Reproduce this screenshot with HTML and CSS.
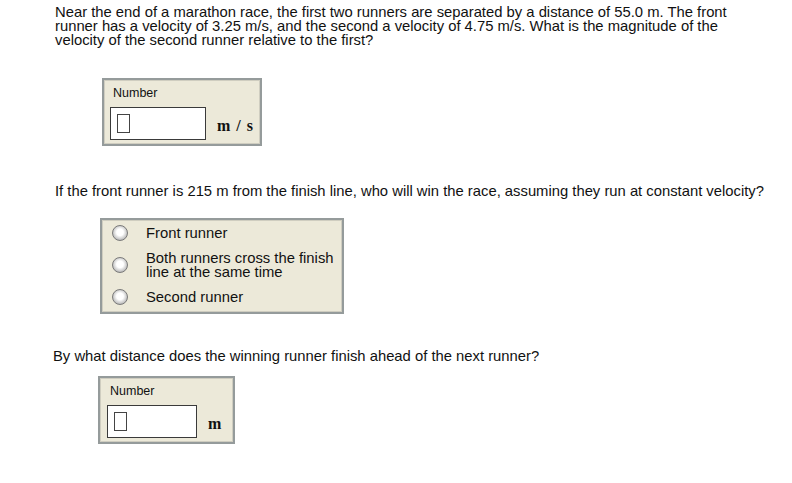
FILE: index.html
```html
<!DOCTYPE html>
<html lang="en">
<head>
  <meta charset="UTF-8">
  <title>Marathon Runners</title>
  <link rel="stylesheet" href="styles.css">
</head>
<body>
  <div class="page">
    <div class="part">
      <p class="question">Near the end of a marathon race, the first two runners are separated by a distance of 55.0 m. The front runner has a velocity of 3.25 m/s, and the second a velocity of 4.75 m/s. What is the magnitude of the velocity of the second runner relative to the first?</p>
      <div class="answer-box box-velocity">
        <div class="label">Number</div>
        <div class="answer-row">
          <div class="number-input wide"><span class="caret"></span></div>
          <span class="unit">m / s</span>
        </div>
      </div>
    </div>

    <div class="part part-two">
      <p class="question">If the front runner is 215 m from the finish line, who will win the race, assuming they run at constant velocity?</p>
      <div class="answer-box choice-box">
        <div class="choice"><span class="radio"></span><span class="choice-text">Front runner</span></div>
        <div class="choice"><span class="radio"></span><span class="choice-text">Both runners cross the finish line at the same time</span></div>
        <div class="choice"><span class="radio"></span><span class="choice-text">Second runner</span></div>
      </div>
    </div>

    <div class="part part-three">
      <p class="question">By what distance does the winning runner finish ahead of the next runner?</p>
      <div class="answer-box box-distance">
        <div class="label">Number</div>
        <div class="answer-row">
          <div class="number-input narrow"><span class="caret"></span></div>
          <span class="unit">m</span>
        </div>
      </div>
    </div>
  </div>
</body>
</html>
```

FILE: styles.css
```css
/* question page */
body {
  margin: 0;
  padding: 0;
  background: #fff;
  color: #111;
  font-family: "Liberation Sans", Arial, sans-serif;
}
.page {
  padding: 5px 0 0 55px;
}
.question {
  margin: 0;
  font-size: 14.8px;
  line-height: 14px;
  width: 712px;
}
.part-two {
  margin-top: 38px;
}
.part-three {
  margin-top: 35px;
  margin-left: -2px;
}
.answer-box {
  box-sizing: border-box;
  background-color: #ece9d9;
  border: 2px solid #959b9b;
  box-shadow: inset 0 0 0 1px #cfcdc0;
}
.box-velocity {
  width: 160px;
  margin: 31px 0 0 47px;
  padding: 6px 4px 4px 6px;
}
.box-distance {
  width: 137px;
  margin: 13px 0 0 45px;
  padding: 6px 4px 4px 7px;
}
.label {
  font-size: 12.5px;
  line-height: 14px;
  padding-left: 3px;
  margin-bottom: 7px;
}
.answer-row {
  display: flex;
  align-items: center;
}
.number-input {
  box-sizing: border-box;
  height: 33px;
  background: #fff;
  border: 1px solid #3a3a3a;
  padding: 6px 0 0 6px;
}
.number-input.wide {
  width: 96px;
}
.number-input.narrow {
  width: 90px;
}
.caret {
  display: block;
  box-sizing: border-box;
  width: 13px;
  height: 19px;
  border: 1px solid #444;
}
.unit {
  margin-left: 11px;
  padding-top: 4px;
  font-family: "Liberation Serif", "Times New Roman", serif;
  font-weight: bold;
  font-size: 16px;
  word-spacing: 2px;
}
.choice-box {
  width: 244px;
  margin: 20px 0 0 45px;
  padding: 5px 3px 7px 10px;
  display: flex;
  flex-direction: column;
  gap: 10px;
}
.choice {
  display: flex;
  align-items: center;
  font-size: 14.8px;
  line-height: 14px;
}
.radio {
  flex: 0 0 auto;
  box-sizing: border-box;
  width: 16px;
  height: 16px;
  border-radius: 50%;
  border: 1px solid #7a7a7a;
  background: radial-gradient(circle at 50% 45%, #ffffff 0, #ffffff 32%, #d4d4d4 58%, #939393 100%);
  margin-right: 18px;
}
.choice-text {
  flex: 1 1 auto;
}
```
